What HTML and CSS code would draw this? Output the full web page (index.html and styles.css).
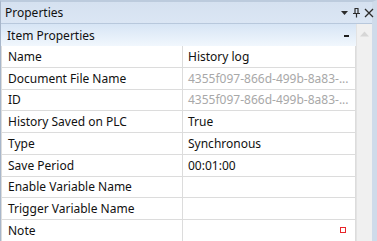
FILE: index.html
```html
<!DOCTYPE html>
<html lang="en">
<head>
    <meta charset="UTF-8">
    <title>Properties</title>
    <link rel="stylesheet" href="styles.css">
</head>
<body>
    <div class="panel">
        <div class="titlebar">
            <span class="title">Properties</span>
            <div class="title-buttons">
                <svg width="9" height="9" viewBox="0 0 9 9"><path d="M1 3h7L4.5 7z" fill="#2b2b2b"/></svg>
                <svg width="9" height="11" viewBox="0 0 9 11"><path d="M2.5 1.5h4M3 1.5v5M6 1.5v5M1 6.5h7M4.5 6.5v4" stroke="#2b2b2b" stroke-width="1.2" fill="none"/></svg>
                <svg width="10" height="10" viewBox="0 0 10 10"><path d="M1 1l8 8M9 1l-8 8" stroke="#2b2b2b" stroke-width="1.3"/></svg>
            </div>
        </div>
        <div class="content">
            <div class="grid">
                <div class="group">
                    <span>Item Properties</span>
                    <span class="collapse"></span>
                </div>
                <div class="row"><div class="name">Name</div><div class="value">History log</div></div>
                <div class="row"><div class="name">Document File Name</div><div class="value readonly">4355f097-866d-499b-8a83-...</div></div>
                <div class="row"><div class="name">ID</div><div class="value readonly">4355f097-866d-499b-8a83-...</div></div>
                <div class="row"><div class="name">History Saved on PLC</div><div class="value">True</div></div>
                <div class="row"><div class="name">Type</div><div class="value">Synchronous</div></div>
                <div class="row"><div class="name">Save Period</div><div class="value">00:01:00</div></div>
                <div class="row"><div class="name">Enable Variable Name</div><div class="value"></div></div>
                <div class="row"><div class="name">Trigger Variable Name</div><div class="value"></div></div>
                <div class="row"><div class="name">Note</div><div class="value note"><span class="marker"></span></div></div>
            </div>
            <div class="scrollbar">
                <svg width="9" height="6" viewBox="0 0 9 6"><path d="M0 5.5h9L4.5 0.5z" fill="#d6d6d6"/></svg>
            </div>
        </div>
    </div>
</body>
</html>
```

FILE: styles.css
```css
html, body {
    margin: 0;
    padding: 0;
}
body {
    width: 377px;
    height: 241px;
    overflow: hidden;
    font-family: "Noto Sans", "Open Sans", sans-serif;
    font-size: 12px;
    color: #111;
    background: #fff;
}
.panel {
    height: 241px;
    box-sizing: border-box;
    border-left: 1px solid #a7b6ca;
    border-right: 5px solid #cfdbea;
    border-top: 2px solid #bccbdd;
    background: #d6e2f1;
    display: flex;
    flex-direction: column;
}
.titlebar {
    height: 21px;
    flex: none;
    display: flex;
    align-items: center;
    justify-content: space-between;
    padding: 0 0 0 4px;
    background: linear-gradient(#d5e1f0, #dbe6f4);
    border-bottom: 1px solid #b8c8dc;
}
.title {
    font-size: 12px;
}
.title-buttons {
    display: flex;
    align-items: center;
    gap: 3px;
    margin-right: -2px;
}
.content {
    flex: 1;
    display: flex;
    min-height: 0;
}
.grid {
    flex: 1;
    background: #fff;
}
.group {
    height: 22px;
    display: flex;
    align-items: center;
    justify-content: space-between;
    padding: 0 7px 0 6px;
    background: linear-gradient(#d7e5f5, #f1f7fd);
}
.collapse {
    width: 5px;
    height: 2px;
    background: #1e1e1e;
    margin-top: 1px;
}
.row {
    display: grid;
    grid-template-columns: 181px 1fr;
    height: 21.75px;
    box-sizing: border-box;
    border-bottom: 1px solid #dcdcdc;
    border-left: 1px solid #dcdcdc;
    border-right: 1px solid #dcdcdc;
}
.name, .value {
    display: flex;
    align-items: center;
    padding-left: 6px;
    white-space: nowrap;
    overflow: hidden;
}
.name {
    border-right: 1px solid #dcdcdc;
}
.value {
    padding-left: 5px;
}
.readonly {
    color: #a8a8a8;
}
.note {
    justify-content: flex-end;
    padding-right: 9px;
}
.marker {
    width: 4px;
    height: 4px;
    border: 1.5px solid #e8262b;
}
.scrollbar {
    width: 16px;
    flex: none;
    background: #f0f0f0;
    border-left: 1px solid #e3e3e3;
    display: flex;
    justify-content: center;
    align-items: flex-start;
    padding-top: 7px;
    box-sizing: border-box;
}
```
